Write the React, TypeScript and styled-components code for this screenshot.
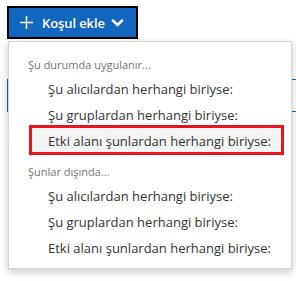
import React from "react";
import styled, { createGlobalStyle } from "styled-components";

const GlobalStyle = createGlobalStyle`
  body {
    margin: 0;
    background: #ffffff;
    font-family: "Open Sans", "Noto Sans", sans-serif;
  }
`;

const Page = styled.div`
  position: relative;
  width: 296px;
  height: 281px;
  overflow: hidden;
  padding: 6px 0 0 7px;
  box-sizing: border-box;
`;

// the field behind the open menu
const Underlay = styled.div`
  position: absolute;
  left: 7px;
  top: 79px;
  width: 300px;
  height: 33px;
  border: 1px solid #1366c0;
  box-sizing: border-box;
`;

const AddButton = styled.button`
  display: flex;
  align-items: center;
  height: 33px;
  padding: 0 12px 0 11px;
  background: #1366c0;
  color: #ffffff;
  border: 2px solid #000000;
  font-family: "Open Sans", sans-serif;
  font-size: 13px;
  font-weight: 600;
  letter-spacing: -0.1px;
  cursor: pointer;
`;

const Label = styled.span`
  margin: 0 6px 0 9px;
`;

const Menu = styled.div`
  position: absolute;
  left: 8px;
  top: 41px;
  width: 284px;
  height: 228px;
  box-sizing: border-box;
  background: #ffffff;
  border: 1px solid #d4d4d4;
  box-shadow: 0 3px 8px rgba(0, 0, 0, 0.22);
  padding: 15px 8px 0 21px;
  z-index: 2;
`;

const Section = styled.div`
  display: flex;
  flex-direction: column;
  & + & {
    margin-top: 10px;
  }
`;

const SectionTitle = styled.div`
  font-size: 11px;
  color: #767676;
  height: 19px;
  line-height: 16px;
  margin-left: -2px;
`;

const Item = styled.div<{ $active?: boolean }>`
  position: relative;
  height: 26px;
  line-height: 26px;
  font-size: 13px;
  color: #333333;
  padding-left: 19px;
  margin-left: -1px;
  background: ${(p) => (p.$active ? "#f4f4f4" : "transparent")};
  white-space: nowrap;
`;

const Highlight = styled.div`
  position: absolute;
  left: 0;
  top: -3px;
  right: -1px;
  bottom: -1px;
  border: 3px solid #e8141f;
`;

const PlusIcon = () => (
  <svg width="13" height="13" viewBox="0 0 13 13">
    <path d="M6.5 0V13M0 6.5H13" stroke="#fff" strokeWidth="1.5" />
  </svg>
);

const ChevronIcon = () => (
  <svg width="13" height="9" viewBox="0 0 13 9">
    <path d="M1.2 1.8L6.5 7L11.8 1.8" stroke="#fff" strokeWidth="2.5" fill="none" />
  </svg>
);

const items = [
  "Şu alıcılardan herhangi biriyse:",
  "Şu gruplardan herhangi biriyse:",
  "Etki alanı şunlardan herhangi biriyse:",
];

const App = () => {
  return (
    <>
      <GlobalStyle />
      <Page>
        <Underlay />
        <AddButton>
          <PlusIcon />
          <Label>Koşul ekle</Label>
          <ChevronIcon />
        </AddButton>
        <Menu>
          <Section>
            <SectionTitle>Şu durumda uygulanır...</SectionTitle>
            {items.map((text, i) => (
              <Item key={text} $active={i === 2}>
                {text}
                {i === 2 && <Highlight />}
              </Item>
            ))}
          </Section>
          <Section>
            <SectionTitle>Şunlar dışında...</SectionTitle>
            {items.map((text) => (
              <Item key={text}>{text}</Item>
            ))}
          </Section>
        </Menu>
      </Page>
    </>
  );
};

export default App;
